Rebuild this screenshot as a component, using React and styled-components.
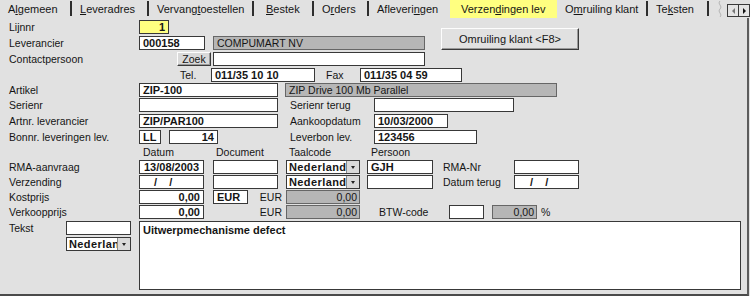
import React from "react";
import styled, { createGlobalStyle } from "styled-components";

const GlobalStyle = createGlobalStyle`
  html, body { margin: 0; padding: 0; background: #e1e1e1; }
  body { font-family: "Liberation Sans", Arial, sans-serif; color: #151515; }
`;

const tones = {
  white: "#ffffff",
  gray: "#b6b6b6",
  yellow: "#ffff80",
};

// Tab strip
const Screen = styled.div`
  width: 750px;
  height: 296px;
  overflow: hidden;
  background: #e1e1e1;
  display: flex;
  flex-direction: column;
`;

const TabBar = styled.div`
  display: flex;
  height: 18px;
  flex: none;
  font-size: 11px;
`;

const Tab = styled.div`
  box-sizing: border-box;
  width: ${p => p.$w}px;
  flex: none;
  display: flex;
  align-items: center;
  justify-content: space-between;
  padding-left: ${p => p.$pl ?? 8}px;
  background: ${p => (p.$active ? tones.yellow : "transparent")};
  white-space: nowrap;
`;

const Sep = styled.span`
  width: 2px;
  height: 15px;
  align-self: flex-start;
  margin-top: 1px;
  background: #2e2e2e;
`;

const Overflow = styled.div`
  flex: 1;
  display: flex;
  align-items: flex-start;
  padding-top: 4px;
  padding-left: 7px;
  gap: 3px;
`;

const ArrowPair = styled.div`
  display: flex;
  border: 1px solid #3a3a3a;
  height: 11px;
`;

const ArrowBtn = styled.span`
  width: 10px;
  display: flex;
  align-items: center;
  justify-content: center;
  background: #e4e4e4;
  border-left: ${p => (p.$right ? "1px solid #3a3a3a" : "none")};
  &::after {
    content: "";
    border-top: 3px solid transparent;
    border-bottom: 3px solid transparent;
    ${p =>
      p.$right
        ? "border-left: 3px solid #111;"
        : "border-right: 3px solid #777;"}
  }
`;

// Form panel
const Panel = styled.div`
  flex: 1;
  box-sizing: border-box;
  width: 749px;
  border-right: 2px solid #5c5c5c;
  border-bottom: 2px solid #4a4a4a;
  padding: 2px 0 0 9px;
  display: flex;
  flex-direction: column;
`;

const TopGrid = styled.div`
  display: grid;
  grid-template-columns: 432px 138px;
`;

const Stack = styled.div`
  display: flex;
  flex-direction: column;
`;

const Row = styled.div`
  display: flex;
  align-items: flex-start;
  height: ${p => p.$h || 15}px;
  padding-left: ${p => p.$pl || 0}px;
  flex: none;
`;

const Label = styled.div`
  box-sizing: border-box;
  width: ${p => (p.$w ? `${p.$w}px` : "auto")};
  flex: none;
  padding-left: ${p => p.$pl || 0}px;
  padding-right: ${p => p.$pr || 0}px;
  font-size: 10.5px;
  line-height: 14px;
  text-align: ${p => p.$align || "left"};
  white-space: nowrap;
`;

const Box = styled.div`
  box-sizing: border-box;
  flex: none;
  width: ${p => p.$w}px;
  height: 14px;
  margin-left: ${p => p.$ml || 0}px;
  padding: 0 ${p => (p.$pad ?? 3)}px;
  background: ${p => tones[p.$tone || "white"]};
  border: 1px solid ${p => (p.$tone === "gray" ? "#666" : "#383838")};
  font-size: ${p => (p.$tone === "gray" ? "10.5px" : "11px")};
  font-weight: ${p => (p.$tone === "gray" ? 400 : 700)};
  line-height: 12px;
  text-align: ${p => p.$align || "left"};
  white-space: pre;
  overflow: hidden;
`;

const Select = styled.div`
  box-sizing: border-box;
  flex: none;
  display: flex;
  width: ${p => p.$w}px;
  height: 14px;
  margin-left: ${p => p.$ml || 0}px;
  margin-top: ${p => p.$mt || 0}px;
  background: #fff;
  border: 1px solid #383838;
`;

const SelectText = styled.span`
  flex: 1;
  overflow: hidden;
  padding-left: 2px;
  font-size: 11px;
  font-weight: 700;
  letter-spacing: 0.4px;
  line-height: 12px;
  white-space: nowrap;
`;

const DropBtn = styled.span`
  width: 12px;
  flex: none;
  display: flex;
  align-items: center;
  justify-content: center;
  background: #dadada;
  border-left: 1px solid #8a8a8a;
  &::after {
    content: "";
    border-left: 2px solid transparent;
    border-right: 2px solid transparent;
    border-top: 3px solid #222;
  }
`;

const Button = styled.button`
  box-sizing: border-box;
  flex: none;
  width: ${p => p.$w}px;
  height: ${p => p.$h}px;
  margin-top: ${p => p.$mt || 0}px;
  padding: 0;
  background: ${p => p.$bg || "#e1e1e1"};
  border: 1px solid;
  border-color: #fdfdfd #3a3a3a #3a3a3a #fdfdfd;
  box-shadow: inset -1px -1px 0 #9a9a9a;
  font-family: inherit;
  font-size: ${p => p.$fs || 11}px;
  color: #151515;
  line-height: 1;
`;

const TextArea = styled.div`
  box-sizing: border-box;
  width: 602px;
  height: 69px;
  margin-left: 8px;
  padding: 2px 3px;
  background: #fff;
  border: 1px solid #383838;
  font-size: 11px;
  font-weight: 700;
  line-height: 12px;
`;

const tabs = [
  { w: 72, pre: "A", u: "l", post: "gemeen" },
  { w: 77, pre: "", u: "L", post: "everadres" },
  { w: 105, pre: "Vervang", u: "t", post: "oestellen" },
  { w: 60, pre: "", u: "B", post: "estek", pl: 12 },
  { w: 55, pre: "O", u: "r", post: "ders" },
  { w: 81, pre: "Afleveri", u: "n", post: "gen", sep: false },
  { w: 107, pre: "Verzen", u: "d", post: "ingen lev", active: true, sep: false, pl: 11 },
  { w: 91, pre: "O", u: "m", post: "ruiling klant" },
  { w: 61, pre: "Te", u: "k", post: "sten" },
];

const Squiggle = () => (
  <svg width="8" height="16" viewBox="0 0 8 16" style={{ marginTop: -3 }}>
    <path d="M4 0 C1 3 7 5 4 8 C1 11 7 13 4 16" fill="none" stroke="#b4b4b4" strokeWidth="1" />
  </svg>
);

const DateBox = ({ w, ml, pad }) => (
  <Box $w={w} $ml={ml} $pad={pad}>{"/    /"}</Box>
);

export default function App() {
  return (
    <Screen>
      <GlobalStyle />
      <TabBar>
        {tabs.map(t => (
          <Tab key={t.post} $w={t.w} $active={t.active} $pl={t.pl}>
            <span>
              {t.pre}
              <u>{t.u}</u>
              {t.post}
            </span>
            {t.sep !== false && <Sep />}
          </Tab>
        ))}
        <Overflow>
          <Squiggle />
          <ArrowPair>
            <ArrowBtn />
            <ArrowBtn $right />
          </ArrowPair>
        </Overflow>
      </TabBar>

      <Panel>
        <TopGrid>
          <Stack>
            <Row $h={16}>
              <Label $w={130}>Lijnnr</Label>
              <Box $w={30} $tone="yellow" $align="right">1</Box>
            </Row>
            <Row $h={16}>
              <Label $w={130}>Leverancier</Label>
              <Box $w={66}>000158</Box>
              <Box $w={212} $ml={8} $tone="gray">COMPUMART NV</Box>
            </Row>
            <Row $h={16}>
              <Label $w={168}>Contactpersoon</Label>
              <Button $w={34} $h={14} $bg="#d9d9d9" $fs={10.5}>Zoek</Button>
              <Box $w={212} $ml={2} />
            </Row>
          </Stack>
          <Button $w={138} $h={22} $mt={8}>Omruiling klant &lt;F8&gt;</Button>
        </TopGrid>

        <Row>
          <Label $w={202} $pl={171}>Tel.</Label>
          <Box $w={104}>011/35 10 10</Box>
          <Label $w={45} $pl={11}>Fax</Label>
          <Box $w={102}>011/35 04 59</Box>
        </Row>
        <Row>
          <Label $w={130}>Artikel</Label>
          <Box $w={139}>ZIP-100</Box>
          <Box $w={272} $ml={7} $tone="gray">ZIP Drive 100 Mb Parallel</Box>
        </Row>
        <Row $h={16}>
          <Label $w={130}>Serienr</Label>
          <Box $w={139} />
          <Label $w={96} $pl={12}>Serienr terug</Label>
          <Box $w={140} />
        </Row>
        <Row $h={16}>
          <Label $w={130}>Artnr. leverancier</Label>
          <Box $w={139}>ZIP/PAR100</Box>
          <Label $w={96} $pl={12}>Aankoopdatum</Label>
          <Box $w={74}>10/03/2000</Box>
        </Row>
        <Row>
          <Label $w={130}>Bonnr. leveringen lev.</Label>
          <Box $w={22}>LL</Box>
          <Box $w={49} $ml={8} $align="right">14</Box>
          <Label $w={156} $pl={72}>Leverbon lev.</Label>
          <Box $w={103}>123456</Box>
        </Row>

        <Row $pl={134}>
          <Label $w={73}>Datum</Label>
          <Label $w={73}>Document</Label>
          <Label $w={82}>Taalcode</Label>
          <Label>Persoon</Label>
        </Row>
        <Row>
          <Label $w={130}>RMA-aanvraag</Label>
          <Box $w={65} $align="center" $pad={1}>13/08/2003</Box>
          <Box $w={65} $ml={9} />
          <Select $w={74} $ml={8}>
            <SelectText>Nederlands</SelectText>
            <DropBtn />
          </Select>
          <Box $w={66} $ml={7}>GJH</Box>
          <Label $w={81} $pl={10}>RMA-Nr</Label>
          <Box $w={65} />
        </Row>
        <Row>
          <Label $w={130}>Verzending</Label>
          <DateBox w={65} pad={14} />
          <Box $w={65} $ml={9} />
          <Select $w={74} $ml={8}>
            <SelectText>Nederlands</SelectText>
            <DropBtn />
          </Select>
          <Box $w={66} $ml={7} />
          <Label $w={81} $pl={10}>Datum terug</Label>
          <DateBox w={65} pad={15} />
        </Row>
        <Row>
          <Label $w={130}>Kostprijs</Label>
          <Box $w={65} $align="right">0,00</Box>
          <Box $w={35} $ml={9}>EUR</Box>
          <Label $w={38} $align="right" $pr={4}>EUR</Label>
          <Box $w={74} $tone="gray" $align="right" $pad={2}>0,00</Box>
        </Row>
        <Row $h={16}>
          <Label $w={130}>Verkoopprijs</Label>
          <Box $w={65} $align="right">0,00</Box>
          <Label $w={82} $align="right" $pr={4}>EUR</Label>
          <Box $w={74} $tone="gray" $align="right" $pad={2}>0,00</Box>
          <Label $w={89} $pl={19}>BTW-code</Label>
          <Box $w={35} />
          <Box $w={45} $ml={8} $tone="gray" $align="right" $pad={2}>0,00</Box>
          <Label $pl={4}>%</Label>
        </Row>
        <Row $h={72}>
          <Label $w={57}>Tekst</Label>
          <Stack>
            <Box $w={65} />
            <Select $w={65} $mt={2}>
              <SelectText>Nederlands</SelectText>
              <DropBtn />
            </Select>
          </Stack>
          <TextArea>Uitwerpmechanisme defect</TextArea>
        </Row>
      </Panel>
    </Screen>
  );
}
